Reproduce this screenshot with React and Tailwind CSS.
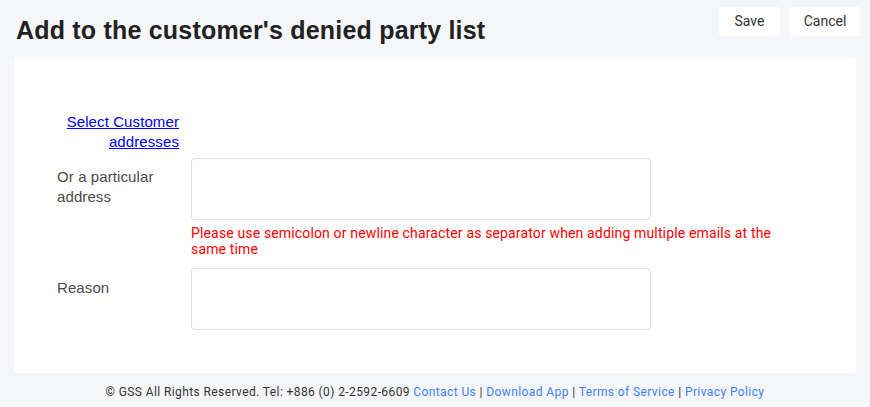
import React from 'react';

const FormRow = ({ label, children, labelClass = '' }) => (
  <div className="flex gap-[12px]">
    <div className={`w-[122px] shrink-0 text-[15px] leading-[20px] tracking-[0.1px] text-[#4a4a4a] ${labelClass}`}>{label}</div>
    <div className="flex-1">{children}</div>
  </div>
);

const App = () => {
  return (
    <div className="min-h-[407px] bg-[#f5f6fa] font-['Liberation_Sans',Arial,sans-serif]">
      <div className="flex items-start justify-between pl-[16px] pr-[9px] pt-[7px]">
        <h1 className="mt-[8px] text-[25px] font-bold leading-[30px] tracking-[0.2px] text-[#222]">
          Add to the customer's denied party list
        </h1>
        <div className="flex gap-[9px] font-['Roboto',sans-serif] text-[14px] text-[#333]">
          <button className="h-[29px] w-[61px] rounded-[3px] bg-white">Save</button>
          <button className="h-[29px] w-[72px] rounded-[3px] bg-white">Cancel</button>
        </div>
      </div>

      <div className="mx-[14px] mt-[12px] h-[316px] rounded-[4px] bg-white pl-[43px] pt-[55px]">
        <FormRow label={<a href="#" className="text-[#0000ee] underline">Select Customer addresses</a>} labelClass="text-right">
          <div className="h-[40px]" />
        </FormRow>

        <div className="mt-[6px]">
          <FormRow label={<div className="pt-[9px]">Or a particular address</div>}>
            <textarea className="block h-[62px] w-[460px] resize-none rounded-[4px] border border-[#dcdfe6] outline-none" />
            <p className="mt-[5px] w-[600px] font-['Roboto',sans-serif] text-[14px] leading-[16px] tracking-[0.15px] text-[#ff0000]">
              Please use semicolon or newline character as separator when adding multiple emails at the same time
            </p>
          </FormRow>
        </div>

        <div className="mt-[11px]">
          <FormRow label={<div className="pt-[10px]">Reason</div>}>
            <textarea className="block h-[62px] w-[460px] resize-none rounded-[4px] border border-[#dcdfe6] outline-none" />
          </FormRow>
        </div>
      </div>

      <footer className="pt-[11px] text-center font-['Roboto',sans-serif] text-[12px] leading-[16px] tracking-[0.4px] text-[#333]">
        © GSS All Rights Reserved. Tel: +886 (0) 2-2592-6609{' '}
        <a href="#" className="text-[#3b82f6]">Contact Us</a> | <a href="#" className="text-[#3b82f6]">Download App</a> |{' '}
        <a href="#" className="text-[#3b82f6]">Terms of Service</a> | <a href="#" className="text-[#3b82f6]">Privacy Policy</a>
      </footer>
    </div>
  );
};

export default App;
